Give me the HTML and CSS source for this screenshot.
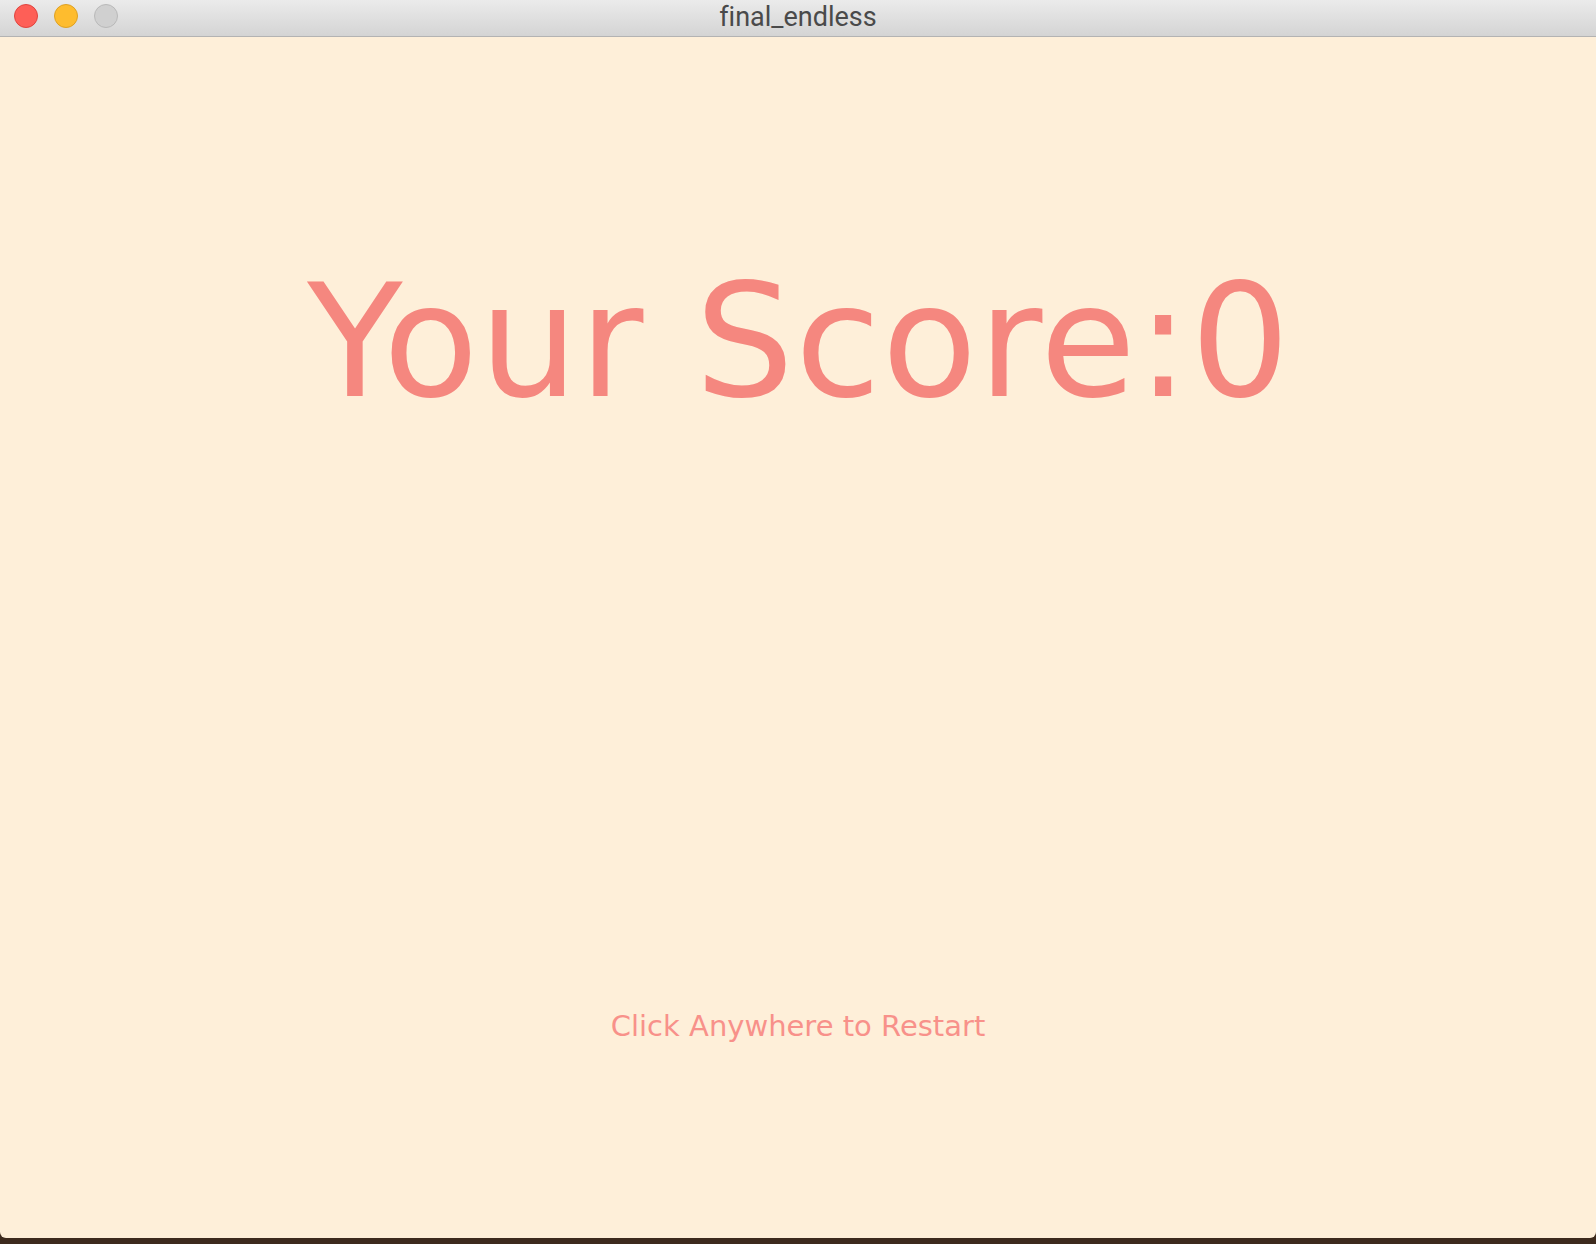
FILE: index.html
```html
<!DOCTYPE html>
<html>
<head>
<meta charset="utf-8">
<title>final_endless</title>
<link rel="stylesheet" href="styles.css">
</head>
<body>
<div class="window">
  <div class="titlebar">
    <div class="lights">
      <span class="light red"></span>
      <span class="light yellow"></span>
      <span class="light grey"></span>
    </div>
    <div class="title">final_endless</div>
  </div>
  <div class="content">
    <div class="score">Your Score:0</div>
    <div class="restart">Click Anywhere to Restart</div>
  </div>
  <div class="desk"></div>
</div>
</body>
</html>
```
FILE: styles.css
```css
html, body {
  margin: 0;
  padding: 0;
  width: 1596px;
  height: 1244px;
  overflow: hidden;
  background: #3d2a1d;
}
.window {
  width: 1596px;
  height: 1244px;
  display: flex;
  flex-direction: column;
}
.titlebar {
  height: 36px;
  border-bottom: 1px solid #b3b3b3;
  background: linear-gradient(#ebebeb, #d4d4d4);
  display: flex;
  align-items: flex-start;
  position: relative;
}
.lights {
  display: flex;
  gap: 16px;
  padding-left: 14px;
  padding-top: 4px;
}
.light {
  width: 24px;
  height: 24px;
  border-radius: 50%;
  box-sizing: border-box;
}
.red { background: #fe5f57; border: 1px solid #e0443e; }
.yellow { background: #febc2e; border: 1px solid #dea123; }
.grey { background: #d0d0d0; border: 1px solid #b9b9b9; }
.title {
  position: absolute;
  left: 0;
  right: 0;
  top: 0;
  height: 36px;
  line-height: 34px;
  text-align: center;
  font-family: Roboto, "Noto Sans", sans-serif;
  font-size: 27px;
  font-variant-ligatures: none;
  color: #4a4a4a;
}
.content {
  flex: 1;
  background: #feefd9;
  display: flex;
  flex-direction: column;
  align-items: center;
  font-family: "DejaVu Sans", sans-serif;
  border-bottom-left-radius: 6px;
  border-bottom-right-radius: 6px;
}
.score {
  margin-top: 210px;
  font-size: 156px;
  line-height: 190px;
  color: #f5877f;
  letter-spacing: 1px;
  padding-left: 2px;
}
.restart {
  margin-top: 571px;
  font-size: 29px;
  line-height: 36px;
  color: #f8918a;
}
.desk {
  height: 6px;
  background: #3d2a1d;
}
```
